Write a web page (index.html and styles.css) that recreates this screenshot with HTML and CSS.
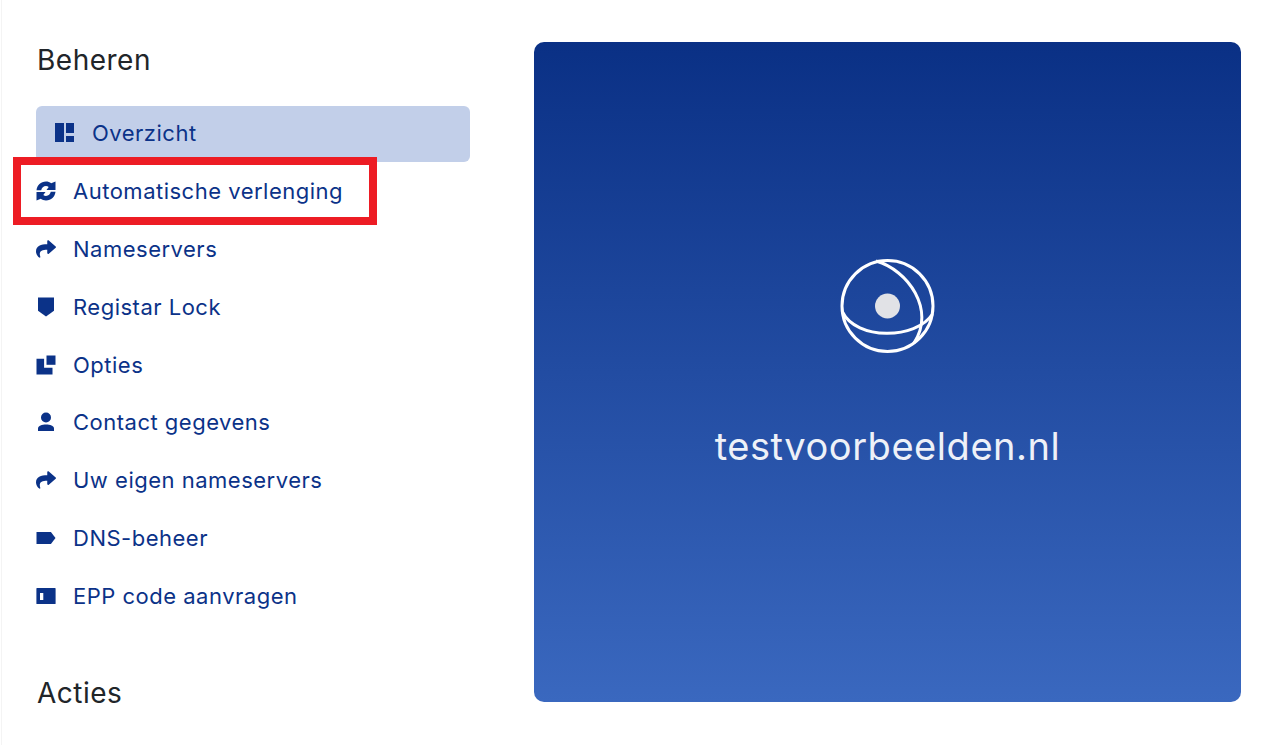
FILE: index.html
```html
<!DOCTYPE html>
<html lang="en">
<head>
    <meta charset="UTF-8">
    <title>Domein beheren</title>
    <link rel="stylesheet" href="styles.css">
</head>
<body>
    <div class="page">
        <div class="sidebar">
            <h2 class="heading">Beheren</h2>
            <ul class="menu">
                <li class="item active">
                    <svg class="icon" viewBox="0 0 20 20"><path d="M0 0h9v19H0zM11 0h8v10h-8zM11 13h8v6h-8z"/></svg>
                    Overzicht
                </li>
                <li class="item">
                    <svg class="icon" viewBox="0 0 20 20"><path d="M.5 9.200C1 4.200 4.800.5 10 .5c2 0 3.700.6 5.200 1.700L19.500.5v8.400h-9l2.200-2.900c-.8-.6-1.700-.9-2.700-.9-2.500 0-4.300 1.800-4.800 4.100z"/><path d="M19.500 10.800C19 15.800 15.200 19.500 10 19.500c-2 0-3.700-.6-5.200-1.700L.5 19.500v-8.400h9l-2.200 2.900c.8.6 1.700.9 2.700.9 2.500 0 4.300-1.800 4.800-4.100z"/></svg>
                    Automatische verlenging
                </li>
                <li class="item">
                    <svg class="icon" viewBox="0 0 512 512"><path d="M503.691 189.836L327.687 37.851C312.281 24.546 288 35.347 288 56.015v80.053C127.371 137.907 0 170.1 0 322.326c0 61.441 39.581 122.309 83.333 154.132 13.653 9.931 33.111-2.533 28.077-18.631C66.066 312.814 132.917 274.316 288 272.085V360c0 20.7 24.3 31.453 39.687 18.164l176.004-152c11.071-9.562 11.086-26.753 0-36.328z"/></svg>
                    Nameservers
                </li>
                <li class="item">
                    <svg class="icon" viewBox="0 0 20 20"><path d="M2 .5h16v13.300L10 19.500 2 13.800z"/></svg>
                    Registar Lock
                </li>
                <li class="item">
                    <svg class="icon" viewBox="0 0 20 20"><path d="M10.500 .5h9v9.300h-9z"/><path d="M.5 3.800h7.600v9h8.400v6.700H.5z"/></svg>
                    Opties
                </li>
                <li class="item">
                    <svg class="icon" viewBox="0 0 20 20"><circle cx="10" cy="5.500" r="5"/><path d="M2 19v-2.400C2 14 6 12.600 10 12.600s8 1.400 8 4V19z"/></svg>
                    Contact gegevens
                </li>
                <li class="item">
                    <svg class="icon" viewBox="0 0 512 512"><path d="M503.691 189.836L327.687 37.851C312.281 24.546 288 35.347 288 56.015v80.053C127.371 137.907 0 170.1 0 322.326c0 61.441 39.581 122.309 83.333 154.132 13.653 9.931 33.111-2.533 28.077-18.631C66.066 312.814 132.917 274.316 288 272.085V360c0 20.7 24.3 31.453 39.687 18.164l176.004-152c11.071-9.562 11.086-26.753 0-36.328z"/></svg>
                    Uw eigen nameservers
                </li>
                <li class="item">
                    <svg class="icon" viewBox="0 0 20 20"><path d="M.5 4h14.400l4.600 6-4.600 6H.5z"/></svg>
                    DNS-beheer
                </li>
                <li class="item">
                    <svg class="icon" viewBox="0 0 20 20"><path fill-rule="evenodd" d="M1 2h18a.6.6 0 0 1 .6.6v14.800a.6.6 0 0 1-.6.6H1a.6.6 0 0 1-.6-.6V2.600A.6.6 0 0 1 1 2zM4 7v7h3.300V7z"/></svg>
                    EPP code aanvragen
                </li>
            </ul>
            <h2 class="heading actions">Acties</h2>
        </div>
        <div class="panel">
            <svg class="globe" viewBox="0 0 100 100">
                <circle cx="49.500" cy="50" r="45.500"/>
                <path d="M4.500 56C18 84 78 84 94.500 58"/>
                <path d="M38 5C70 14 98 54 76 87"/>
                <circle class="dot" cx="49.500" cy="50" r="12.500"/>
            </svg>
            <div class="domain">testvoorbeelden.nl</div>
        </div>
    </div>
    <div class="highlight"></div>
</body>
</html>
```

FILE: styles.css
```css
html, body {
    height: 100%;
}
body {
    margin: 0;
    background-color: white;
    font-family: Inter, "Liberation Sans", sans-serif;
    overflow: hidden;
    position: relative;
}
.page {
    display: flex;
    height: 745px;
    margin-left: 1px;
    padding: 42px 41px 0 34px;
    box-sizing: border-box;
    border-left: 1px solid #f4f4f4;
}
.sidebar {
    width: 434px;
    margin-right: 64px;
    flex-shrink: 0;
}
.heading {
    margin: 0;
    padding-left: 1px;
    font-size: 28px;
    font-weight: 400;
    letter-spacing: 0.5px;
    line-height: 36px;
    color: #212529;
}
.menu {
    list-style: none;
    margin: 28px 0 0;
    padding: 0;
}
.item {
    display: flex;
    align-items: center;
    gap: 17px;
    height: 56px;
    margin-bottom: 1.9px;
    padding-bottom: 2px;
    box-sizing: border-box;
    font-size: 22px;
    letter-spacing: 0.5px;
    color: #0b3288;
}
.item.active {
    padding-left: 19px;
    background-color: #c2cfe9;
    border-radius: 6px;
}
.icon {
    width: 20px;
    height: 20px;
    fill: #0b3288;
    flex-shrink: 0;
}
.actions {
    margin-top: 50px;
}
.panel {
    flex: 1;
    height: 660px;
    display: flex;
    flex-direction: column;
    align-items: center;
    justify-content: center;
    background: linear-gradient(to bottom, #0a3085, #3a68bf);
    border-radius: 10px;
}
.globe {
    width: 100px;
    height: 100px;
    margin-top: -19px;
    fill: none;
    stroke: white;
    stroke-width: 3;
}
.globe .dot {
    fill: #e1e2e6;
    stroke: none;
}
.domain {
    margin-top: 67px;
    font-size: 38px;
    letter-spacing: 0.55px;
    line-height: 46px;
    color: #eef1f8;
}
.highlight {
    position: absolute;
    left: 13px;
    top: 157px;
    width: 364px;
    height: 68px;
    box-sizing: border-box;
    border: 8px solid #ed1c24;
}
```
